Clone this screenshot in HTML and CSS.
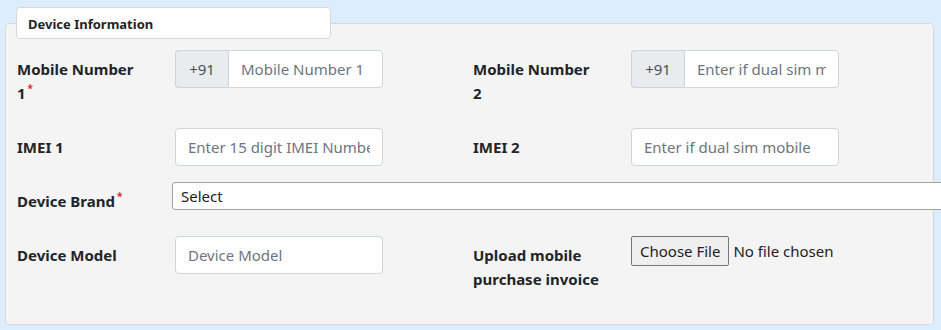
FILE: index.html
```html
<!DOCTYPE html>
<html>
<head>
<meta charset="utf-8">
<link rel="stylesheet" href="styles.css">
</head>
<body>
<fieldset class="panel">
  <legend class="legend">Device Information</legend>
  <div class="row first">
    <div class="field">
      <label class="label">Mobile Number 1<sup class="req">*</sup></label>
      <div class="group">
        <span class="prefix">+91</span>
        <input class="input grouped" type="text" placeholder="Mobile Number 1">
      </div>
    </div>
    <div class="field">
      <label class="label">Mobile Number 2</label>
      <div class="group">
        <span class="prefix">+91</span>
        <input class="input grouped" type="text" placeholder="Enter if dual sim mobile">
      </div>
    </div>
  </div>
  <div class="row">
    <div class="field">
      <label class="label">IMEI 1</label>
      <input class="input" type="text" placeholder="Enter 15 digit IMEI Number">
    </div>
    <div class="field">
      <label class="label">IMEI 2</label>
      <input class="input" type="text" placeholder="Enter if dual sim mobile">
    </div>
  </div>
  <div class="row">
    <label class="label brand">Device Brand<sup class="req">*</sup></label>
    <select class="select"><option>Select</option></select>
  </div>
  <div class="row last">
    <div class="field">
      <label class="label">Device Model</label>
      <input class="input" type="text" placeholder="Device Model">
    </div>
    <div class="field">
      <label class="label wide">Upload mobile purchase invoice</label>
      <div class="file">
        <span class="file-btn">Choose File</span>
        <span class="file-text">No file chosen</span>
      </div>
    </div>
  </div>
</fieldset>
</body>
</html>
```
FILE: styles.css
```css
html, body {
  margin: 0;
  padding: 0;
  background: #dceefd;
  font-family: "Segoe UI", "Noto Sans", "Open Sans", sans-serif;
  color: #212529;
  overflow: hidden;
}
.panel {
  margin: 7px 0 0 5px;
  width: 929px;
  box-sizing: border-box;
  height: 318px;
  background: #f4f4f4;
  border: 1px solid #d6d9dc;
  border-radius: 4px;
  padding: 0 0 0 11px;
  min-width: 0;
  overflow: visible;
}
.legend {
  box-sizing: border-box;
  width: 315px;
  height: 32px;
  margin-left: -1px;
  padding: 2px 11px 0;
  background: #fff;
  border: 1px solid #d6d9dc;
  border-radius: 4px;
  font-size: 13px;
  font-weight: 700;
  line-height: 28px;
  color: #212529;
}
.row {
  display: flex;
  margin-bottom: 16px;
}
.row.first {
  margin-top: 11px;
}
.field {
  display: flex;
  width: 456px;
  flex: none;
  align-items: flex-start;
}
.label {
  width: 158px;
  flex: none;
  box-sizing: border-box;
  padding: 7px 36px 7px 0;
  font-size: 15px;
  font-weight: 700;
  line-height: 24px;
  color: #212529;
}
.label.wide {
  padding-right: 14px;
}
.label.brand {
  width: 155px;
}
.req {
  color: #e0262f;
  font-size: 10px;
  line-height: 0;
  vertical-align: 7px;
  margin-left: 2px;
}
.group {
  display: flex;
  width: 208px;
  height: 38px;
}
.prefix {
  box-sizing: border-box;
  width: 53px;
  height: 38px;
  display: flex;
  align-items: center;
  justify-content: center;
  background: #e9ecef;
  border: 1px solid #ced4da;
  border-right: none;
  border-radius: 4px 0 0 4px;
  font-size: 15px;
  color: #495057;
}
.input {
  box-sizing: border-box;
  width: 208px;
  height: 38px;
  border: 1px solid #ced4da;
  border-radius: 4px;
  background: #fff;
  padding: 0 12px;
  font-family: inherit;
  font-size: 15px;
  color: #495057;
  outline: none;
  margin: 0;
}
.input.grouped {
  width: 155px;
  border-radius: 0 4px 4px 0;
}
.input::placeholder {
  color: #6c757d;
  opacity: 1;
}
.select {
  flex: none;
  box-sizing: border-box;
  width: 800px;
  height: 28px;
  border: 1px solid #a2a2a2;
  border-radius: 3px;
  background: #fff;
  padding: 0 0 0 8px;
  font-family: inherit;
  font-size: 15px;
  color: #212121;
  appearance: none;
  margin: 0;
}
.file {
  display: flex;
  align-items: center;
  height: 30px;
}
.file-btn {
  box-sizing: border-box;
  height: 30px;
  padding: 0 8px;
  display: flex;
  align-items: center;
  background: #efefef;
  border: 1px solid #767676;
  border-radius: 2px;
  font-size: 15px;
  color: #212121;
}
.file-text {
  margin-left: 4px;
  font-size: 15px;
  color: #212121;
}
```
